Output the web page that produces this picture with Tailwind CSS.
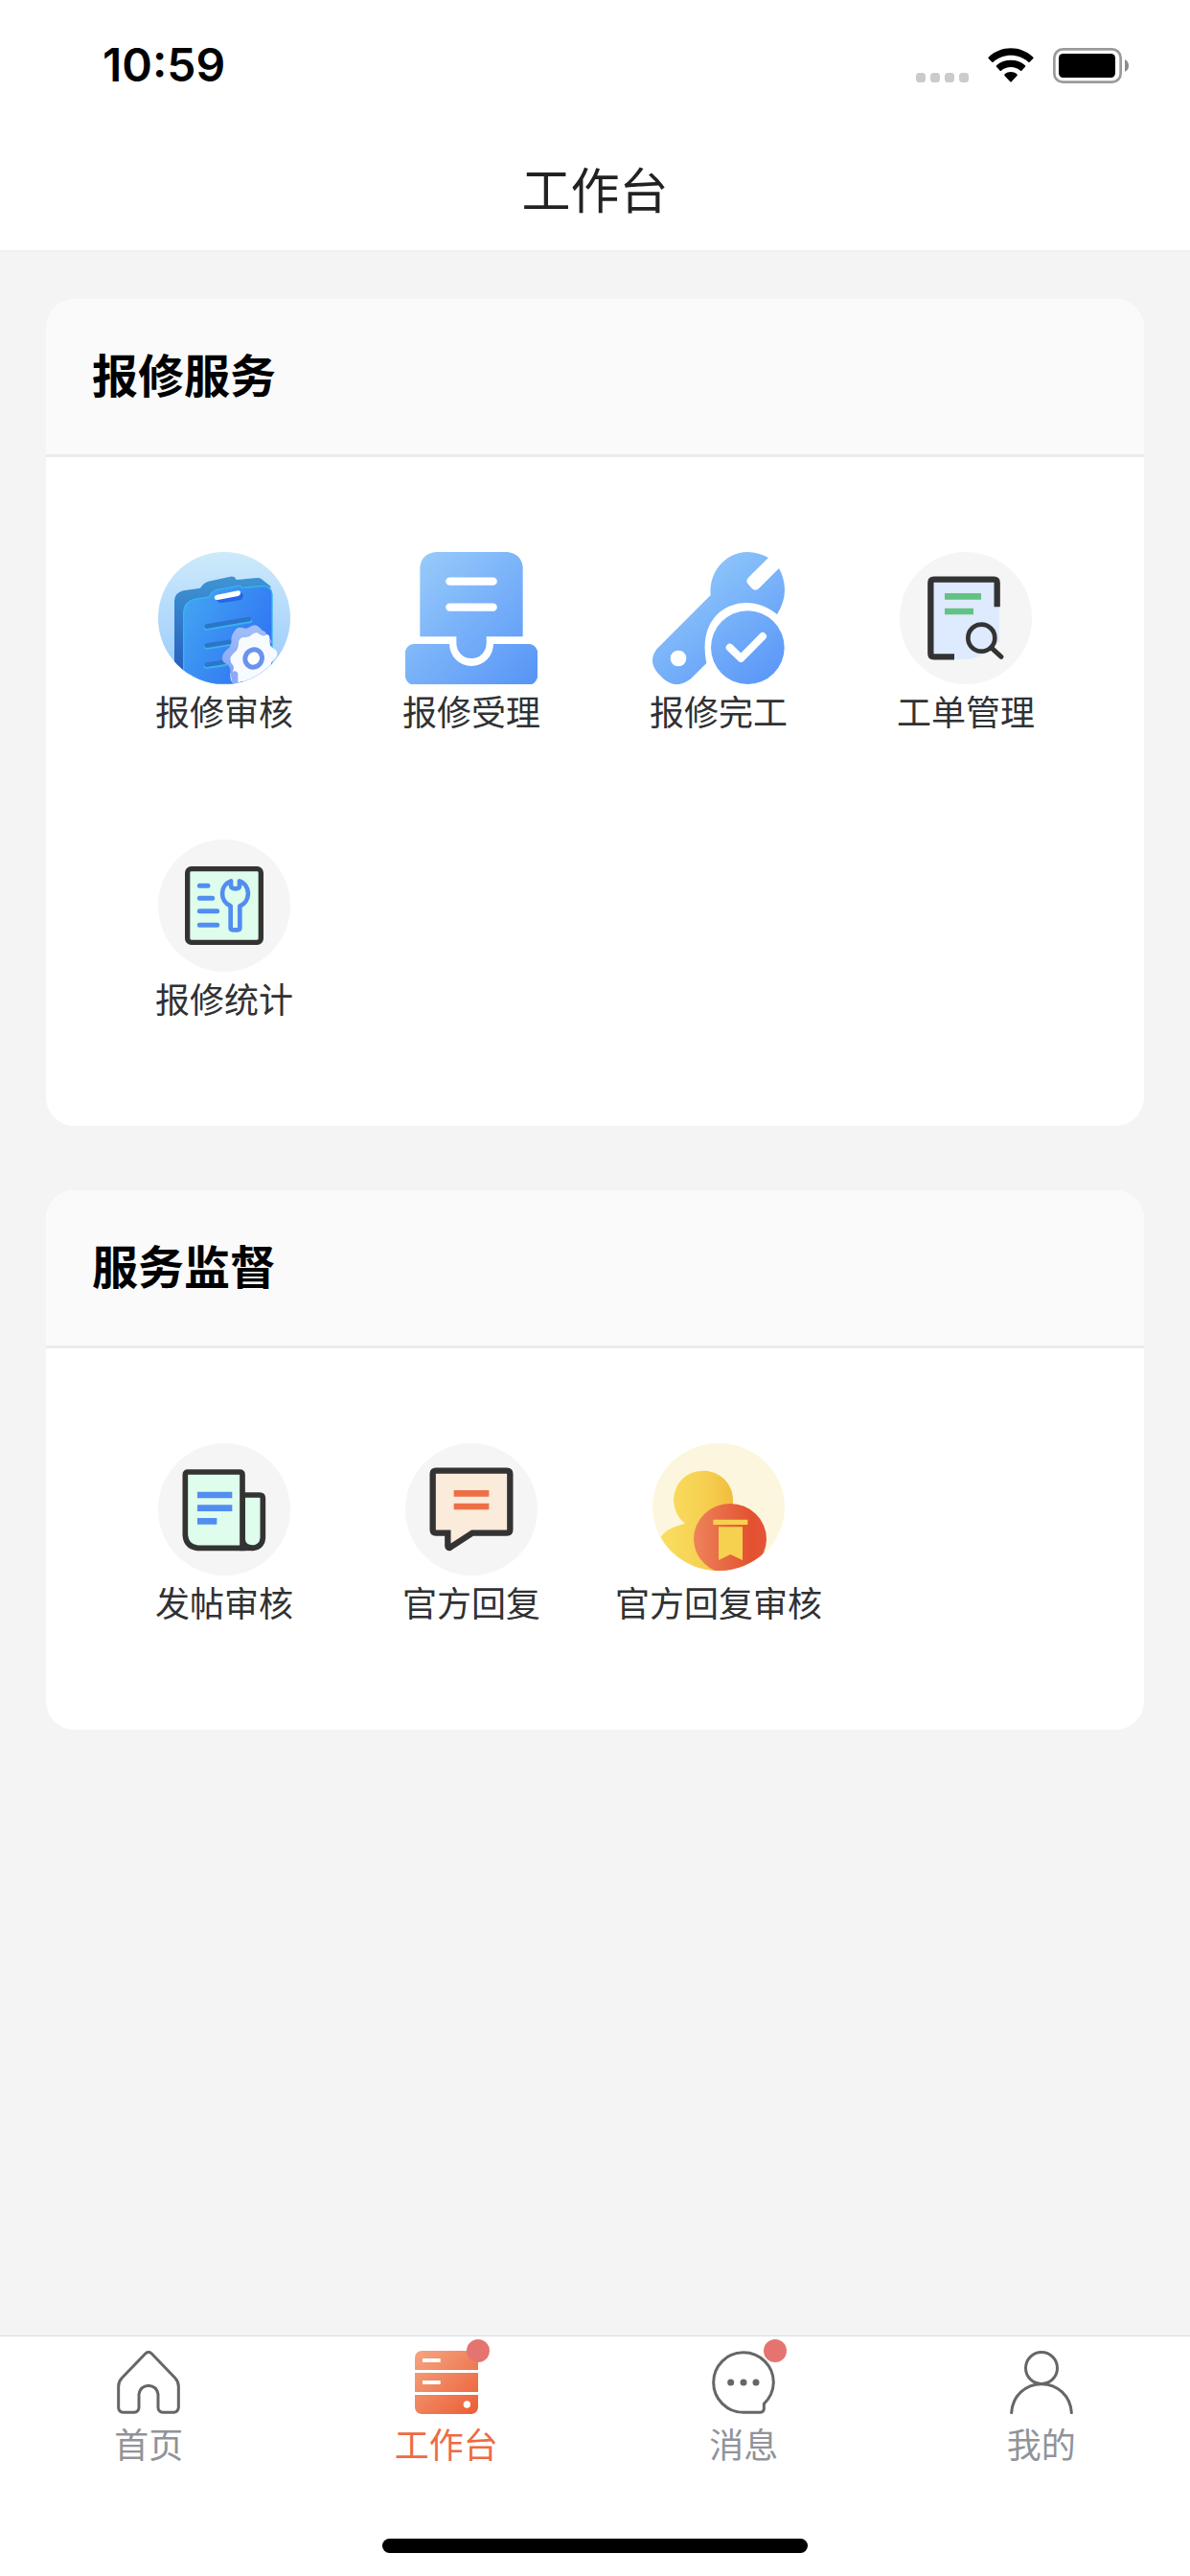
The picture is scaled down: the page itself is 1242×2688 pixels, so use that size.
<!DOCTYPE html>
<html lang="zh-CN">
<head>
  <meta charset="UTF-8" />
  <meta name="viewport" content="width=device-width, initial-scale=1.0" />
  <title>工作台</title>
  <script src="https://cdn.jsdelivr.net/npm/@tailwindcss/browser@4"></script>
</head>
<body class="min-h-screen flex flex-col bg-[#f4f4f4] text-[#303133] font-['Noto_Sans_CJK_SC',sans-serif]">
  <header class="bg-white border-b-3 border-[#f1f1f1]">
    <!-- status bar -->
    <div class="h-32 pt-2 pl-[107px] pr-16 flex items-center justify-between text-black">
      <span class="font-['Inter',sans-serif] font-semibold text-[48px] leading-none">10:59</span>
      <div class="flex items-center gap-5">
        <svg class="w-[55px] h-[37px]" viewBox="0 0 55 37" fill="#cbcbcb" aria-hidden="true">
          <rect x="0" y="26" width="10" height="10" rx="3.5" />
          <rect x="15" y="26" width="10" height="10" rx="3.5" />
          <rect x="30" y="26" width="10" height="10" rx="3.5" />
          <rect x="45" y="26" width="10" height="10" rx="3.5" />
        </svg>
        <svg class="w-12 h-[37px]" viewBox="0 0 144 111" aria-hidden="true">
          <path d="M2 29C41-9 103-9 142 29Q144 31 142 33L131 44Q129 46 127 44C96 16 48 16 17 44Q15 46 13 44L2 33Q0 31 2 29Z" />
          <path d="M27 55C52 33 92 33 117 55Q119 57 117 59L106 71Q104 73 102 71C85 56 59 56 42 71Q40 73 38 71L27 59Q25 57 27 55Z" />
          <path d="M53 82C64 73 80 73 91 82Q94 85 91 88L74 106Q72 108 70 106L53 88Q50 85 53 82Z" />
        </svg>
        <svg class="w-[79px] h-[37px]" viewBox="0 0 237 111" aria-hidden="true">
          <rect x="4" y="4" width="208" height="103" rx="27" fill="none" stroke="#9a9a9a" stroke-width="8" />
          <rect x="18" y="18" width="177" height="75" rx="14" />
          <path d="M225 36Q237 42 237 55.500T225 75Z" fill="#8c8c8c" />
        </svg>
      </div>
    </div>
    <h1 class="h-[133px] pt-1 flex items-center justify-center text-[51px] text-[#222]">工作台</h1>
  </header>

  <main class="flex-1 px-12 pt-12 pb-16 flex flex-col gap-[67px]">
    <section class="bg-white rounded-[30px] overflow-hidden">
      <h2 class="h-[165px] px-12 pb-2 flex items-center bg-[#fafafa] border-b-3 border-[#ebebeb] text-[48px] font-bold text-black">报修服务</h2>
      <div class="grid grid-cols-4 gap-y-[108px] px-[57px] pt-[99px] pb-[107px] text-4xl leading-[54px] whitespace-nowrap">
        <a href="#" class="flex flex-col items-center">
          <svg class="size-[138px]" viewBox="0 0 414 414" aria-hidden="true">
            <defs>
              <linearGradient id="sky" x1="0" y1="0" x2="0" y2="1"><stop offset="0" stop-color="#cdeafb" /><stop offset="1" stop-color="#96c8fb" /></linearGradient>
              <linearGradient id="boardBack" x1="0" y1="0" x2="0" y2="1"><stop offset="0" stop-color="#3f94d4" /><stop offset="1" stop-color="#2259bd" /></linearGradient>
              <linearGradient id="boardFront" x1="0" y1="0.200" x2="1" y2="0.800"><stop offset="0" stop-color="#43a3f2" /><stop offset="1" stop-color="#2e70f4" /></linearGradient>
              <linearGradient id="gearBack" x1="0" y1="0" x2="0" y2="1"><stop offset="0" stop-color="#a3c0fb" /><stop offset="1" stop-color="#7f9df5" /></linearGradient>
              <clipPath id="disc"><circle cx="207" cy="207" r="207" /></clipPath>
            </defs>
            <g clip-path="url(#disc)">
              <rect width="414" height="414" fill="url(#sky)" />
              <path d="M51 414V152Q53 127 79 121L132 113Q142 97 157 92L226 77Q240 75 245 87L310 81Q318 80 324 85L353 108L340 140L100 200L90 414Z" fill="url(#boardBack)" />
              <path d="M80 414V188Q82 156 113 148L160 141Q166 124 182 119L246 107Q258 104 264 112L328 106Q355 107 357 132V414Z" fill="url(#boardFront)" stroke="#36b6ef" stroke-width="4" />
              <path d="M178 139L254 126Q267 126 266 139Q265 149 254 151L200 159Q188 160 185 153Z" fill="#2366e8" />
              <path d="M184 134L251 121Q259 121 258 130Q257 136 250 138L187 150Q177 151 176 143Q176 136 184 134Z" fill="#fff" />
              <g fill="none" stroke-linecap="round">
                <path d="M151 238L287 215M151 298L240 284M151 358L210 350" stroke="#39b3f2" stroke-width="15" />
                <path d="M152 233L285 210M152 293L240 279M152 353L210 344" stroke="#2d75ca" stroke-width="14" />
              </g>
              <path d="M238 250Q246 232 264 237Q278 243 288 234Q306 222 318 237Q325 246 335 250L355 280L290 400Q266 420 240 400Q224 390 226 370Q225 356 211 349Q195 340 204 319Q211 308 223 299Q231 291 229 276Q230 259 238 250Z" fill="url(#gearBack)" />
              <path d="M252 281Q257 265 272 267Q285 269 294 258Q307 248 317 257Q330 267 342 258Q352 261 348 279Q348 295 362 302Q377 309 371 327Q364 337 355 345Q352 358 350 374Q343 390 326 390Q311 388 304 402Q290 420 280 413Q268 398 253 409Q225 420 226 382Q239 372 236 357Q222 342 228 327Q235 317 246 308Q253 297 252 281Z" fill="#f7faff" />
              <path d="M226 379Q243 366 250 380L250 414H233Z" fill="#8eaaf7" />
              <ellipse cx="299" cy="333" rx="26" ry="28" fill="#fff" stroke="#6b93ed" stroke-width="15" transform="rotate(28 299 333)" />
            </g>
          </svg>
          <span>报修审核</span>
        </a>
        <a href="#" class="flex flex-col items-center">
          <svg class="size-[138px]" viewBox="0 0 414 414" aria-hidden="true">
            <defs>
              <linearGradient id="tray" gradientUnits="userSpaceOnUse" x1="30" y1="20" x2="400" y2="400"><stop offset="0" stop-color="#98cbfa" /><stop offset="1" stop-color="#5896f7" /></linearGradient>
            </defs>
            <path d="M46 265V48Q50 6 94 0H320Q364 6 368 48V265H254V286A47 47 0 0 1 160 286V265Z" fill="url(#tray)" />
            <path d="M0 310Q6 290 25 288H138A69 69 0 0 0 276 288H389Q408 290 414 310V392Q410 408 396 414H18Q4 408 0 392Z" fill="url(#tray)" />
            <path d="M139 92H275M139 173H275" stroke="#fff" stroke-width="25" stroke-linecap="round" />
          </svg>
          <span>报修受理</span>
        </a>
        <a href="#" class="flex flex-col items-center">
          <svg class="size-[138px]" viewBox="0 0 414 414" aria-hidden="true">
            <defs>
              <linearGradient id="wrench" gradientUnits="userSpaceOnUse" x1="120" y1="60" x2="380" y2="400"><stop offset="0" stop-color="#8fc6fa" /><stop offset="1" stop-color="#5a97f8" /></linearGradient>
            </defs>
            <path d="M182 135C176 60 230 0 298 0Q334 1 363 18L300 80Q290 91 300 101L312 115Q323 124 334 113L396 51Q413 80 414 118Q414 158 390 195C330 145 250 148 200 198Q150 252 169 348L120 397Q75 432 34 397L18 380Q-16 342 14 303Z" fill="url(#wrench)" />
            <circle cx="81" cy="333" r="25" fill="#fff" />
            <circle cx="298" cy="299" r="115" fill="url(#wrench)" />
            <path d="M242 299L277 333L345 264" fill="none" stroke="#fff" stroke-width="24" stroke-linecap="round" stroke-linejoin="round" />
          </svg>
          <span>报修完工</span>
        </a>
        <a href="#" class="flex flex-col items-center">
          <svg class="size-[138px]" viewBox="0 0 414 414" aria-hidden="true">
            <circle cx="207" cy="207" r="207" fill="#f5f5f5" />
            <path d="M97 85H312V280Q270 332 205 336H97Z" fill="#deeafd" />
            <path d="M171 328H107Q97 328 97 318V96Q97 86 107 86H295Q305 86 305 96V172" fill="none" stroke="#333" stroke-width="19" />
            <path d="M141 139H255M141 186H231" stroke="#61c383" stroke-width="20" />
            <circle cx="256" cy="269" r="42" fill="#deeafd" stroke="#333" stroke-width="14" />
            <path d="M286 299L318 328" stroke="#333" stroke-width="15" stroke-linecap="round" />
          </svg>
          <span>工单管理</span>
        </a>
        <a href="#" class="flex flex-col items-center">
          <svg class="size-[138px]" viewBox="0 0 414 414" aria-hidden="true">
            <circle cx="207" cy="207" r="207" fill="#f5f5f5" />
            <rect x="92" y="92" width="230" height="230" rx="12" fill="#defdec" stroke="#333" stroke-width="16" />
            <path d="M130 145H156M130 184H170M130 224H185M130 268H185" stroke="#528df0" stroke-width="15" stroke-linecap="round" />
            <path d="M228 130A42 42 0 0 0 227 208V276Q227 283 234 283H249Q256 283 256 276V208A42 42 0 0 0 255 130V145Q255 154 242 154T228 145Z" fill="none" stroke="#528df0" stroke-width="14" stroke-linejoin="round" />
          </svg>
          <span>报修统计</span>
        </a>
      </div>
    </section>

    <section class="bg-white rounded-[30px] overflow-hidden">
      <h2 class="h-[165px] px-12 pb-2 flex items-center bg-[#fafafa] border-b-3 border-[#ebebeb] text-[48px] font-bold text-black">服务监督</h2>
      <div class="grid grid-cols-4 gap-y-[108px] px-[57px] pt-[99px] pb-[107px] text-4xl leading-[54px] whitespace-nowrap">
        <a href="#" class="flex flex-col items-center">
          <svg class="size-[138px]" viewBox="0 0 414 414" aria-hidden="true">
            <circle cx="207" cy="207" r="207" fill="#f5f5f5" />
            <path d="M264 162H318Q328 162 328 172V296Q326 326 296 328Q266 326 264 300Z" fill="#defdec" stroke="#333" stroke-width="17" />
            <path d="M94 90H255Q264 90 264 98V328H123Q88 324 85 288V99Q85 90 94 90Z" fill="#defdec" stroke="#333" stroke-width="17" />
            <path d="M255 328H296" stroke="#333" stroke-width="17" />
            <path d="M123 162H232M123 203H232M123 244H184" stroke="#528df0" stroke-width="20" />
          </svg>
          <span>发帖审核</span>
        </a>
        <a href="#" class="flex flex-col items-center">
          <svg class="size-[138px]" viewBox="0 0 414 414" aria-hidden="true">
            <circle cx="207" cy="207" r="207" fill="#f5f5f5" />
            <path d="M96 86H318Q328 86 328 96V271Q328 281 318 281H210L141 326Q134 330 133 322V281H96Q86 281 86 271V96Q86 86 96 86Z" fill="#fbebda" stroke="#333" stroke-width="19" />
            <path d="M152 157H262M152 198H262" stroke="#ed6f46" stroke-width="20" />
          </svg>
          <span>官方回复</span>
        </a>
        <a href="#" class="flex flex-col items-center">
          <svg class="size-[138px]" viewBox="0 0 414 414" aria-hidden="true">
            <defs>
              <linearGradient id="gold" gradientUnits="userSpaceOnUse" x1="40" y1="0" x2="255" y2="0"><stop offset="0" stop-color="#f9dd60" /><stop offset="0.600" stop-color="#f6cf50" /><stop offset="1" stop-color="#f2bb3d" /></linearGradient>
              <linearGradient id="ember" x1="0" y1="0" x2="1" y2="0"><stop offset="0" stop-color="#ed845b" /><stop offset="0.800" stop-color="#e3512f" /><stop offset="1" stop-color="#e5543a" /></linearGradient>
              <clipPath id="oval"><ellipse cx="207" cy="200" rx="206" ry="199" /></clipPath>
            </defs>
            <ellipse cx="207" cy="200" rx="207" ry="200" fill="#fdf6de" />
            <g clip-path="url(#oval)">
              <path d="M102 252Q66 222 66 178C68 120 110 86 160 86S252 125 252 178V414H20L20 310Q28 268 102 252Z" fill="url(#gold)" />
              <ellipse cx="243" cy="299" rx="114" ry="110" fill="url(#ember)" />
            </g>
            <path d="M190 239H298V255H190ZM207 262H282V366L244 348L207 366Z" fill="#f6d150" />
          </svg>
          <span>官方回复审核</span>
        </a>
      </div>
    </section>
  </main>

  <nav class="bg-white border-t border-[#d9dee6]">
    <div class="grid grid-cols-4 pt-[15px] text-4xl leading-[54px] text-[#909399]">
      <a href="#" class="flex flex-col items-center gap-[3px]">
        <svg class="size-[66px]" viewBox="0 0 198 198" fill="none" stroke="#666" stroke-width="9" aria-hidden="true">
          <path d="M89 9Q99 0 109 9L182 85Q193 97 193 112V178Q191 192 178 193H144Q130 191 129 178V136Q125 111 99 109Q73 111 69 136V178Q68 191 54 193H20Q6 192 5 178V112Q5 97 16 85Z" />
        </svg>
        <span>首页</span>
      </a>
      <a href="#" aria-current="page" class="flex flex-col items-center gap-[3px] text-[#ed6b42]">
        <span class="relative">
          <svg class="size-[66px]" viewBox="0 0 198 198" aria-hidden="true">
            <defs>
              <linearGradient id="server" gradientUnits="userSpaceOnUse" x1="10" y1="10" x2="180" y2="190"><stop offset="0" stop-color="#f4a37e" /><stop offset="1" stop-color="#ec623a" /></linearGradient>
            </defs>
            <path d="M0 60V20Q2 2 20 0H178Q196 2 198 20V60ZM0 69H198V129H0ZM0 138H198V178Q196 196 178 198H20Q2 196 0 178Z" fill="url(#server)" />
            <path d="M24 30H80M24 99H80" stroke="#fff" stroke-width="12" />
            <circle cx="163" cy="168" r="11" fill="#fff" />
          </svg>
          <span class="absolute -top-3 -right-3 size-6 rounded-full bg-[#e57470]"></span>
        </span>
        <span>工作台</span>
      </a>
      <a href="#" class="flex flex-col items-center gap-[3px]">
        <span class="relative">
          <svg class="size-[66px]" viewBox="0 0 198 198" fill="none" stroke="#666" stroke-width="9" aria-hidden="true">
            <path d="M99 193A94 94 0 1 1 193 99Q192 138 163 166V182Q162 192 152 193Z" />
            <g fill="#666" stroke="none"><circle cx="59" cy="99" r="10.500" /><circle cx="99" cy="99" r="10.500" /><circle cx="138" cy="99" r="10.500" /></g>
          </svg>
          <span class="absolute -top-3 -right-3 size-6 rounded-full bg-[#e57470]"></span>
        </span>
        <span>消息</span>
      </a>
      <a href="#" class="flex flex-col items-center gap-[3px]">
        <svg class="size-[66px]" viewBox="0 0 198 198" fill="none" stroke="#666" stroke-width="9" stroke-linecap="round" aria-hidden="true">
          <circle cx="99" cy="54" r="49.500" />
          <path d="M5 194C8 142 48 104 99 104S190 142 193 194" />
        </svg>
        <span>我的</span>
      </a>
    </div>
    <!-- home indicator -->
    <div class="w-[444px] h-[15px] mx-auto mt-[73px] mb-6 rounded-full bg-black"></div>
  </nav>
</body>
</html>
